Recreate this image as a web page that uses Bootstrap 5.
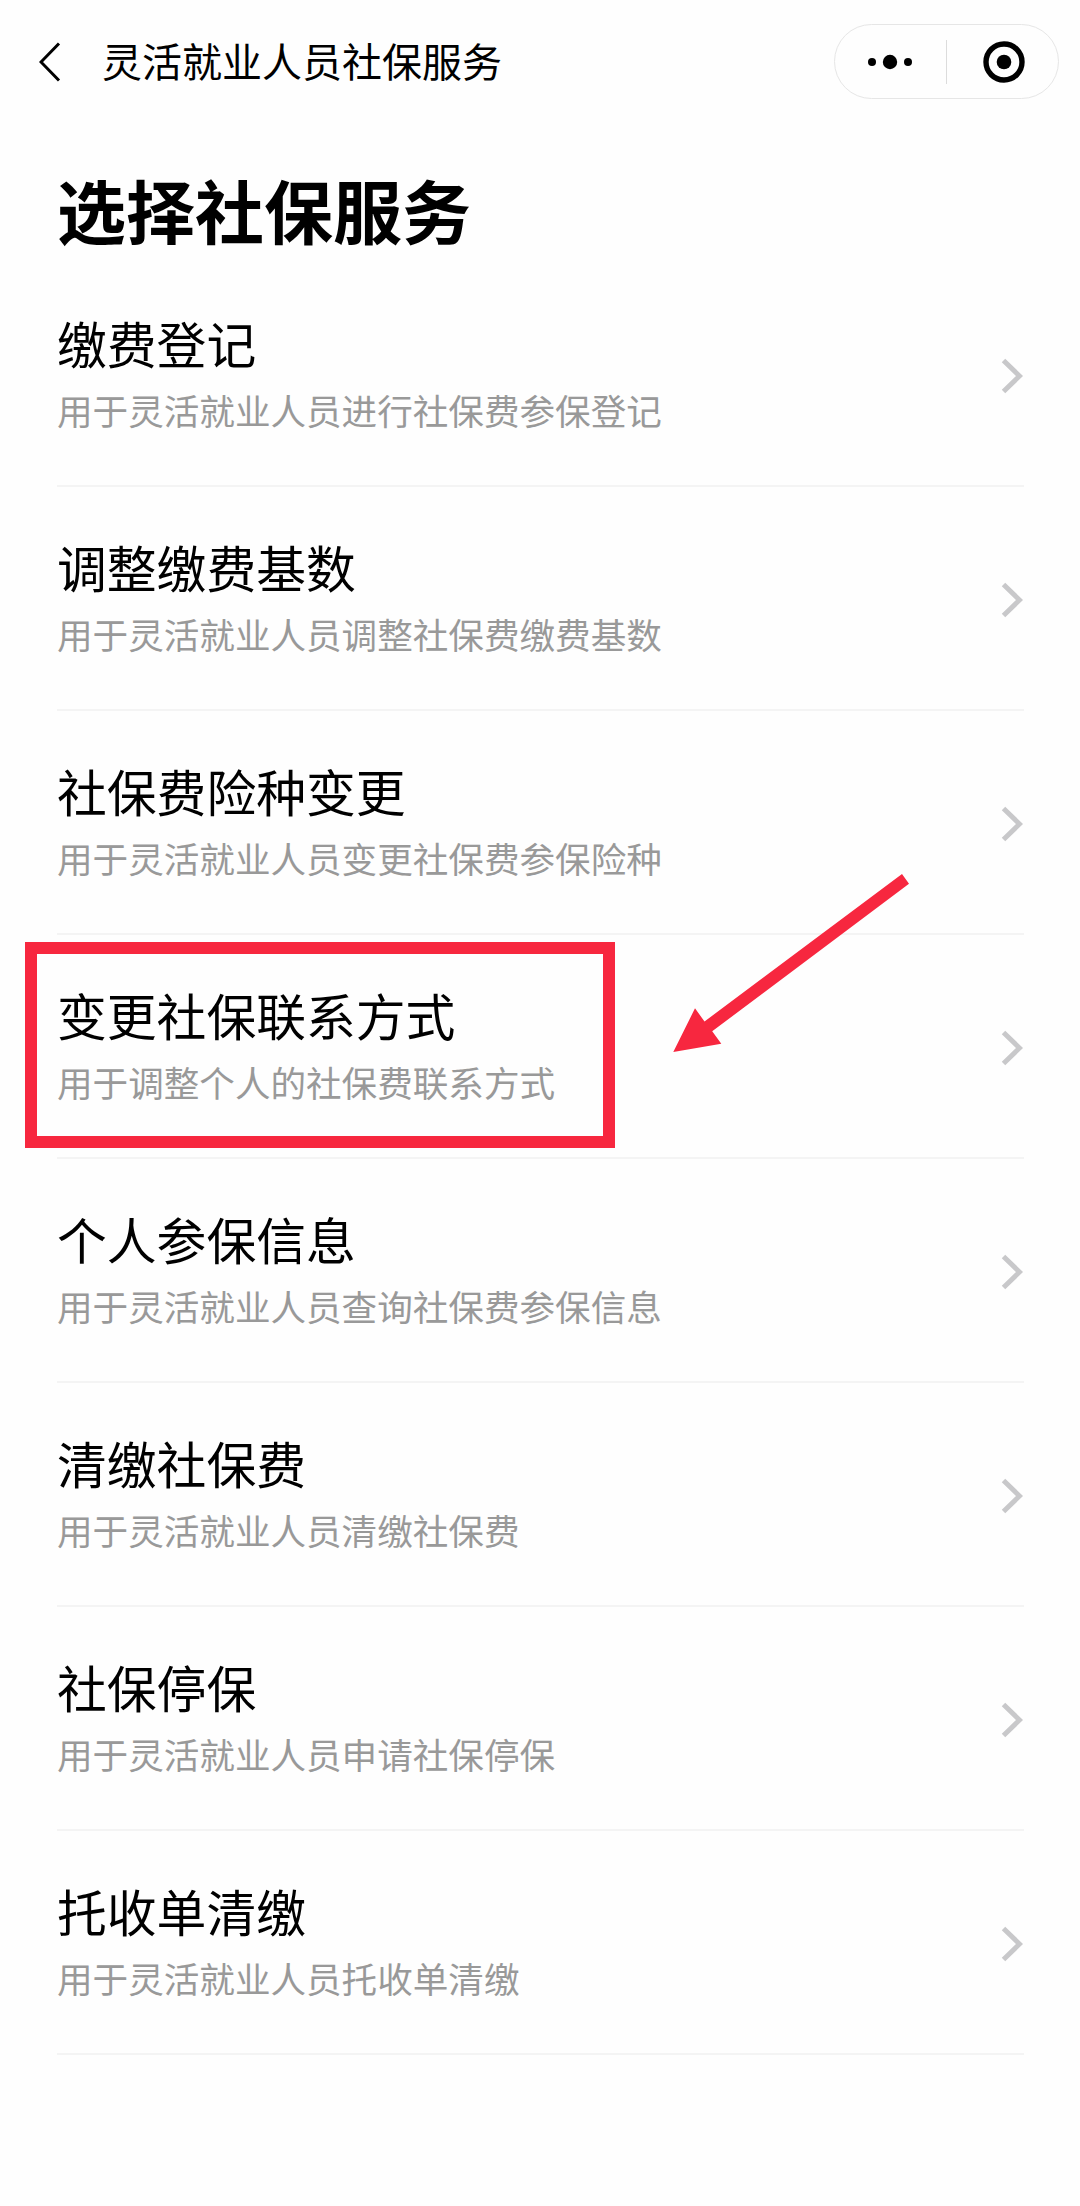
<!DOCTYPE html>
<html lang="zh-CN">
<head>
<meta charset="utf-8">
<meta name="viewport" content="width=device-width, initial-scale=1">
<title>灵活就业人员社保服务</title>
<link href="https://cdn.jsdelivr.net/npm/bootstrap@5.3.0/dist/css/bootstrap.min.css" rel="stylesheet">
<style>
  body { background: #fefefe; color: #000; font-family: "Noto Sans CJK SC", sans-serif; overflow-x: hidden; }
  .topbar { height: 123px; padding: 0 21px 0 39px; }
  .topbar-title { font-size: 40px; line-height: 60px; font-weight: 400; margin: -4px 0 0 41px; }
  .capsule { width: 225px; height: 75px; border: 1px solid #e6e6e6; border-radius: 38px; }
  .capsule-line { width: 1px; height: 44px; background: #dcdcdc; }
  .capsule-menu { padding-right: 1px; }
  .capsule-close { padding-left: 3px; }
  .page-heading { height: 140px; padding: 36px 57px 0; font-size: 69px; line-height: 100px; font-weight: 700; margin: 0; }
  .service-list { margin: 0 56px 0 57px; }
  .service-row { height: 224px; border-bottom: 2px solid #f4f4f4; color: inherit; text-decoration: none; }
  .service-text { padding-bottom: 6px; }
  .service-name { font-size: 49.8px; line-height: 70px; }
  .service-desc { font-size: 35.6px; line-height: 50px; margin-top: 8px; color: #999; }
  .service-row .chevron { margin: 4px 1px 0 0; }
  .callout-box { left: -32px; top: 7px; width: 590px; height: 206px; border: 12px solid #f7273f; pointer-events: none; }
  .callout-arrow { left: 613px; top: -65px; pointer-events: none; }
</style>
<script src="https://cdn.jsdelivr.net/npm/bootstrap@5.3.0/dist/js/bootstrap.bundle.min.js"></script>
</head>
<body>
<svg class="d-none">
  <symbol id="chev" viewBox="0 0 22 36"><path d="M2.500 2.500 18.500 18 2.500 33.500" fill="none" stroke="#c8c8ca" stroke-width="5"/></symbol>
</svg>
<header class="topbar d-flex align-items-center">
  <svg width="22" height="40" viewBox="0 0 22 40"><path d="M20 1.500 2 20 20 38.500" fill="none" stroke="#000" stroke-width="3"/></svg>
  <h1 class="topbar-title">灵活就业人员社保服务</h1>
  <div class="capsule d-flex align-items-center ms-auto">
    <div class="capsule-menu flex-fill d-flex justify-content-center">
      <svg width="44" height="16" viewBox="0 0 44 16"><circle cx="4" cy="8" r="4"/><circle cx="22" cy="8" r="7.200"/><circle cx="40" cy="8" r="4"/></svg>
    </div>
    <div class="capsule-line"></div>
    <div class="capsule-close flex-fill d-flex justify-content-center">
      <svg width="42" height="42" viewBox="0 0 42 42"><circle cx="21" cy="21" r="18" fill="none" stroke="#000" stroke-width="5.400"/><circle cx="21" cy="21" r="7.300"/></svg>
    </div>
  </div>
</header>
<main>
  <h2 class="page-heading">选择社保服务</h2>
  <nav class="service-list d-flex flex-column">
    <a href="#" class="service-row d-flex align-items-center justify-content-between"><div class="service-text"><div class="service-name">缴费登记</div><div class="service-desc">用于灵活就业人员进行社保费参保登记</div></div><svg class="chevron" width="22" height="36"><use href="#chev"/></svg></a>
    <a href="#" class="service-row d-flex align-items-center justify-content-between"><div class="service-text"><div class="service-name">调整缴费基数</div><div class="service-desc">用于灵活就业人员调整社保费缴费基数</div></div><svg class="chevron" width="22" height="36"><use href="#chev"/></svg></a>
    <a href="#" class="service-row d-flex align-items-center justify-content-between"><div class="service-text"><div class="service-name">社保费险种变更</div><div class="service-desc">用于灵活就业人员变更社保费参保险种</div></div><svg class="chevron" width="22" height="36"><use href="#chev"/></svg></a>
    <a href="#" class="service-row position-relative d-flex align-items-center justify-content-between"><div class="service-text"><div class="service-name">变更社保联系方式</div><div class="service-desc">用于调整个人的社保费联系方式</div></div><svg class="chevron" width="22" height="36"><use href="#chev"/></svg>
      <span class="callout-box position-absolute"></span>
      <svg class="callout-arrow position-absolute" width="245" height="190" viewBox="0 0 245 190"><path d="M3.300 182 25 138.300 34.500 151.500 232 4 239 13.700 42.200 161.300 51.300 173.700Z" fill="#f7273f"/></svg>
    </a>
    <a href="#" class="service-row d-flex align-items-center justify-content-between"><div class="service-text"><div class="service-name">个人参保信息</div><div class="service-desc">用于灵活就业人员查询社保费参保信息</div></div><svg class="chevron" width="22" height="36"><use href="#chev"/></svg></a>
    <a href="#" class="service-row d-flex align-items-center justify-content-between"><div class="service-text"><div class="service-name">清缴社保费</div><div class="service-desc">用于灵活就业人员清缴社保费</div></div><svg class="chevron" width="22" height="36"><use href="#chev"/></svg></a>
    <a href="#" class="service-row d-flex align-items-center justify-content-between"><div class="service-text"><div class="service-name">社保停保</div><div class="service-desc">用于灵活就业人员申请社保停保</div></div><svg class="chevron" width="22" height="36"><use href="#chev"/></svg></a>
    <a href="#" class="service-row d-flex align-items-center justify-content-between"><div class="service-text"><div class="service-name">托收单清缴</div><div class="service-desc">用于灵活就业人员托收单清缴</div></div><svg class="chevron" width="22" height="36"><use href="#chev"/></svg></a>
  </nav>
</main>
</body>
</html>
